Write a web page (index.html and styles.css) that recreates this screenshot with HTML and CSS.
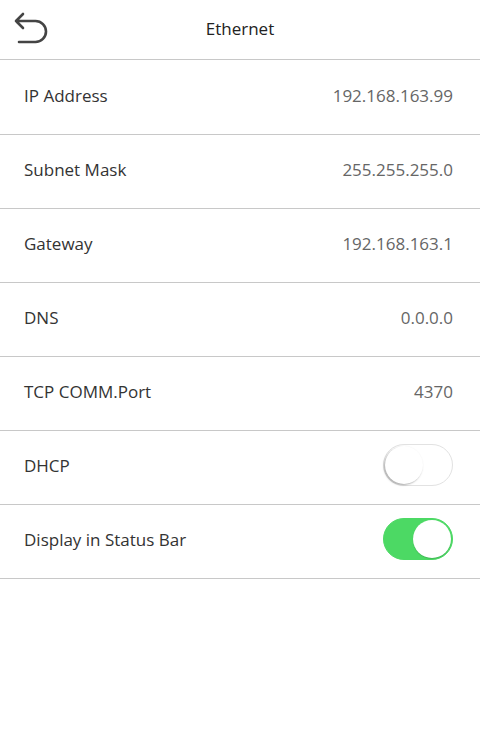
FILE: index.html
```html
<!DOCTYPE html>
<html lang="en">
<head>
<meta charset="UTF-8">
<meta name="viewport" content="width=device-width, initial-scale=1.0">
<title>Ethernet</title>
<link rel="stylesheet" href="styles.css">
</head>
<body>
<div class="header">
    <button class="back" aria-label="Back">
        <svg width="48" height="48" viewBox="0 0 48 48">
            <path d="M23 14 L16 21 L23 28 M16 21 H35.5 A10.5 10.5 0 0 1 35.5 42 H19" fill="none" stroke="#444" stroke-width="2.6" stroke-linecap="round" stroke-linejoin="round"/>
        </svg>
    </button>
    <h1>Ethernet</h1>
</div>
<div class="list">
    <div class="row"><span class="label">IP Address</span><span class="value">192.168.163.99</span></div>
    <div class="row"><span class="label">Subnet Mask</span><span class="value">255.255.255.0</span></div>
    <div class="row"><span class="label">Gateway</span><span class="value">192.168.163.1</span></div>
    <div class="row"><span class="label">DNS</span><span class="value">0.0.0.0</span></div>
    <div class="row"><span class="label">TCP COMM.Port</span><span class="value">4370</span></div>
    <div class="row">
        <span class="label">DHCP</span>
        <label class="switch">
            <input type="checkbox">
            <span class="slider"></span>
        </label>
    </div>
    <div class="row">
        <span class="label">Display in Status Bar</span>
        <label class="switch">
            <input type="checkbox" checked>
            <span class="slider"></span>
        </label>
    </div>
</div>
</body>
</html>
```
FILE: styles.css
```css
body {
    margin: 0;
    font-family: "Open Sans", "Noto Sans", sans-serif;
    background-color: #ffffff;
    color: #333333;
}
.header {
    position: relative;
    height: 57px;
    padding-bottom: 2px;
    border-bottom: 1px solid #c8c8c8;
    display: flex;
    align-items: center;
    justify-content: center;
}
.header h1 {
    margin: 0;
    font-size: 17px;
    font-weight: normal;
    color: #222222;
}
.back {
    position: absolute;
    left: 0;
    top: 0;
    width: 48px;
    height: 48px;
    padding: 0;
    border: none;
    background: none;
}
.back svg {
    display: block;
}
.list {
    padding-top: 1px;
}
.row {
    height: 68px;
    padding: 0 27px 5px 24px;
    border-bottom: 1px solid #c8c8c8;
    display: flex;
    align-items: center;
    justify-content: space-between;
    font-size: 17px;
}
.label {
    color: #333333;
}
.value {
    color: #666666;
}
.switch {
    position: relative;
    display: inline-block;
    width: 70px;
    height: 42px;
}
.switch input {
    opacity: 0;
    width: 0;
    height: 0;
}
.slider {
    position: absolute;
    top: 0;
    left: 0;
    right: 0;
    bottom: 0;
    background-color: #ffffff;
    border: 1px solid #e2e2e2;
    border-radius: 21px;
    box-sizing: border-box;
}
.slider:before {
    position: absolute;
    content: "";
    width: 38px;
    height: 38px;
    left: 1px;
    top: 1px;
    background-color: #ffffff;
    border-radius: 50%;
    box-shadow: -1px 1px 2px rgba(0, 0, 0, 0.35);
}
input:checked + .slider {
    background-color: #4cd964;
    border-color: #4cd964;
}
input:checked + .slider:before {
    left: auto;
    right: 1px;
    box-shadow: 0 1px 1px rgba(0, 0, 0, 0.15);
}
```
